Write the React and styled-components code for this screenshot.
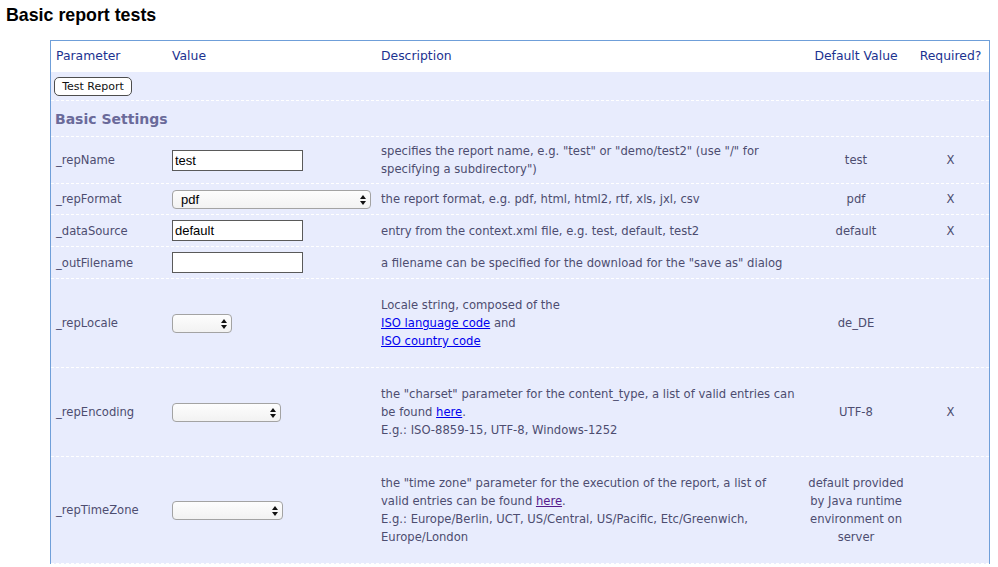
import React from "react";
import styled, { createGlobalStyle } from "styled-components";

const uiFont = `"DejaVu Sans", "Open Sans", sans-serif`;
const cols = "116px 209px 424px 112px 77px";

const GlobalStyle = createGlobalStyle`
  html, body {
    margin: 0;
    padding: 0;
    background: #fff;
  }
  body {
    padding: 0 8px;
  }
`;

const Page = styled.div`
  padding: 0;
`;

const Heading = styled.h1`
  font-family: "Liberation Sans", Arial, sans-serif;
  font-size: 17.8px;
  font-weight: bold;
  color: #000;
  margin: 0 0 0 -2px;
  padding-top: 6px;
  line-height: 19px;
`;

const Panel = styled.div`
  margin: 15px 0 0 42px;
  width: 938px;
  border: 1px solid #6f9fd9;
  border-bottom: none;
  background: #e8ecfd;
  font-family: ${uiFont};
  font-size: 11.6px;
  color: #4d4d70;
`;

const Row = styled.div`
  display: grid;
  grid-template-columns: ${cols};
  align-items: center;
  min-height: ${(p) => p.h}px;
  border-bottom: 1px dashed #fff;
  background: ${(p) => (p.head ? "#fff" : "transparent")};
  color: ${(p) => (p.head ? "#1b3290" : "inherit")};
  font-size: ${(p) => (p.head ? "12.4px" : "inherit")};
  box-sizing: border-box;
`;

const Cell = styled.div`
  padding: 0 5px;
  line-height: 18px;
  text-align: ${(p) => (p.center ? "center" : "left")};
  margin: ${(p) => (p.para ? "17px 0" : "0")};
`;

const FullCell = styled.div`
  grid-column: 1 / -1;
  padding: 0 3px;
`;

const SectionTitle = styled.div`
  grid-column: 1 / -1;
  padding: 0 4px;
  font-size: 14px;
  font-weight: bold;
  color: #6a6a9a;
`;

const Button = styled.button`
  font-family: ${uiFont};
  font-size: 11px;
  color: #111;
  background: #fff;
  border: 1px solid #4d4d4d;
  border-radius: 5px;
  height: 19px;
  width: 78px;
  padding: 0;
  display: block;
`;

const TextInput = styled.input`
  font-family: "Liberation Sans", Arial, sans-serif;
  font-size: 13px;
  color: #000;
  width: 131px;
  height: 21px;
  box-sizing: border-box;
  border: 1px solid #5a5a5a;
  padding: 0 2px;
  background: #fff;
  outline: none;
  display: block;
`;

const SelectWrap = styled.div`
  position: relative;
  width: ${(p) => p.w}px;
  height: 19px;
`;

const Select = styled.select`
  appearance: none;
  -webkit-appearance: none;
  width: 100%;
  height: 19px;
  box-sizing: border-box;
  border: 1px solid #a3a3a3;
  border-radius: 4px;
  background: linear-gradient(#fdfdfd, #f2f2f2);
  font-family: "Liberation Sans", Arial, sans-serif;
  font-size: 13px;
  color: #000;
  padding: 0 0 0 8px;
  display: block;
  outline: none;
`;

const Arrows = styled.svg`
  position: absolute;
  right: 5px;
  top: 5px;
  pointer-events: none;
`;

const Link = styled.a`
  color: ${(p) => (p.visited ? "#551a8b" : "#0000ee")};
  text-decoration: underline;
`;

const DropDown = ({ w, value }) => (
  <SelectWrap w={w}>
    <Select defaultValue={value}>
      <option>{value}</option>
    </Select>
    <Arrows width="6" height="10" viewBox="0 0 6 10">
      <path d="M3 0 L6 4 L0 4 Z M0 6 L6 6 L3 10 Z" fill="#111" />
    </Arrows>
  </SelectWrap>
);

const rows = [
  {
    name: "_repName",
    h: 47,
    field: <TextInput defaultValue="test" />,
    desc: (
      <>
        specifies the report name, e.g. "test" or "demo/test2" (use "/" for
        specifying a subdirectory")
      </>
    ),
    def: "test",
    req: true,
  },
  {
    name: "_repFormat",
    h: 31,
    field: <DropDown w={199} value="pdf" />,
    desc: "the report format, e.g. pdf, html, html2, rtf, xls, jxl, csv",
    def: "pdf",
    req: true,
  },
  {
    name: "_dataSource",
    h: 32,
    field: <TextInput defaultValue="default" />,
    desc: "entry from the context.xml file, e.g. test, default, test2",
    def: "default",
    req: true,
  },
  {
    name: "_outFilename",
    h: 32,
    field: <TextInput defaultValue="" />,
    desc: 'a filename can be specified for the download for the "save as" dialog',
    def: "",
    req: false,
  },
  {
    name: "_repLocale",
    h: 89,
    para: true,
    field: <DropDown w={60} value="" />,
    desc: (
      <>
        Locale string, composed of the
        <br />
        <Link href="#">ISO language code</Link> and
        <br />
        <Link href="#">ISO country code</Link>
      </>
    ),
    def: "de_DE",
    req: false,
  },
  {
    name: "_repEncoding",
    h: 89,
    para: true,
    field: <DropDown w={109} value="" />,
    desc: (
      <>
        the "charset" parameter for the content_type, a list of valid entries
        can be found <Link href="#">here</Link>.
        <br />
        E.g.: ISO-8859-15, UTF-8, Windows-1252
      </>
    ),
    def: "UTF-8",
    req: true,
  },
  {
    name: "_repTimeZone",
    h: 107,
    para: true,
    field: <DropDown w={111} value="" />,
    desc: (
      <>
        the "time zone" parameter for the execution of the report, a list of
        valid entries can be found{" "}
        <Link href="#" visited>
          here
        </Link>
        .
        <br />
        E.g.: Europe/Berlin, UCT, US/Central, US/Pacific, Etc/Greenwich,
        Europe/London
      </>
    ),
    def: "default provided by Java runtime environment on server",
    req: false,
  },
];

const App = () => {
  return (
    <Page>
      <GlobalStyle />
      <Heading>Basic report tests</Heading>
      <Panel>
        <Row head h={31}>
          <Cell>Parameter</Cell>
          <Cell>Value</Cell>
          <Cell>Description</Cell>
          <Cell center>Default Value</Cell>
          <Cell center>Required?</Cell>
        </Row>
        <Row h={29}>
          <FullCell>
            <Button>Test Report</Button>
          </FullCell>
        </Row>
        <Row h={36}>
          <SectionTitle>Basic Settings</SectionTitle>
        </Row>
        {rows.map((r) => (
          <Row key={r.name} h={r.h}>
            <Cell>{r.name}</Cell>
            <Cell>{r.field}</Cell>
            <Cell para={r.para}>{r.desc}</Cell>
            <Cell center>{r.def}</Cell>
            <Cell center>{r.req ? "X" : ""}</Cell>
          </Row>
        ))}
      </Panel>
    </Page>
  );
};

export default App;
